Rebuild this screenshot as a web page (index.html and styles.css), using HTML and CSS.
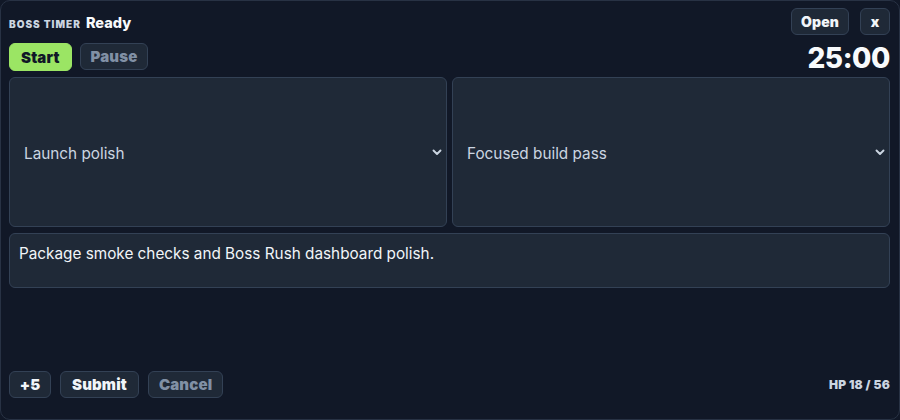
FILE: index.html
```html
<!DOCTYPE html>
<html lang="en">
<head>
    <meta charset="UTF-8">
    <meta name="viewport" content="width=device-width, initial-scale=1.0">
    <title>Boss Timer</title>
    <link rel="stylesheet" href="styles.css">
</head>
<body>
    <div class="widget">
        <!-- Title row -->
        <div class="top-row">
            <div class="title">
                <span class="brand">Boss Timer</span>
                <span class="status">Ready</span>
            </div>
            <div class="window-actions">
                <button class="btn">Open</button>
                <button class="btn btn-close">x</button>
            </div>
        </div>

        <!-- Controls + clock -->
        <div class="control-row">
            <div class="button-group">
                <button class="btn btn-start">Start</button>
                <button class="btn btn-muted">Pause</button>
            </div>
            <div class="clock">25:00</div>
        </div>

        <div class="select-grid">
            <select class="field">
                <option>Launch polish</option>
            </select>
            <select class="field">
                <option>Focused build pass</option>
            </select>
        </div>

        <textarea class="field notes">Package smoke checks and Boss Rush dashboard polish.</textarea>

        <div class="footer">
            <div class="button-group">
                <button class="btn btn-small">+5</button>
                <button class="btn btn-wide">Submit</button>
                <button class="btn btn-muted">Cancel</button>
            </div>
            <div class="hp">HP 18 / 56</div>
        </div>
    </div>
</body>
</html>
```

FILE: styles.css
```css
* {
    box-sizing: border-box;
}
html, body {
    margin: 0;
    background-color: #111827;
}
body {
    font-family: Inter, "Noto Sans", sans-serif;
    color: #f8fafc;
}
.widget {
    height: 420px;
    display: flex;
    flex-direction: column;
    border: 1px solid #283244;
    border-radius: 10px;
    padding: 7px 9px 21px 8px;
    background-color: #111827;
}
.top-row {
    display: flex;
    justify-content: space-between;
    align-items: center;
    height: 27px;
}
.title {
    display: flex;
    align-items: baseline;
    gap: 5px;
    margin-top: 2px;
}
.brand {
    font-size: 10px;
    font-weight: 900;
    text-transform: uppercase;
    letter-spacing: 0.1em;
    color: #cbd5e1;
}
.status {
    font-size: 14.5px;
    font-weight: 800;
    color: #f8fafc;
}
.window-actions {
    display: flex;
    gap: 11px;
}
.btn {
    font-family: inherit;
    height: 27px;
    padding: 0 10px;
    font-size: 15px;
    font-weight: 900;
    letter-spacing: 0.01em;
    color: #f1f5f9;
    background-color: #1f2937;
    border: 1px solid #334155;
    border-radius: 6px;
    cursor: pointer;
}
.window-actions .btn {
    font-size: 14px;
    padding: 0 9px;
}
.btn-close {
    width: 30px;
    padding: 0;
}
.btn-small {
    width: 42px;
    padding: 0;
}
.btn-wide {
    padding: 0 11px;
}
.btn-start {
    height: 28px;
    background-color: #9be564;
    border-color: #9be564;
    color: #111827;
    padding: 0 11px;
}
.btn-muted {
    color: #8190a5;
}
.control-row {
    display: flex;
    justify-content: space-between;
    align-items: center;
    margin-top: 8px;
    height: 28px;
}
.button-group {
    display: flex;
    gap: 8px;
}
.clock {
    font-size: 28px;
    font-weight: 800;
    line-height: 1;
    letter-spacing: -0.015em;
    margin-top: 2px;
}
.select-grid {
    display: grid;
    grid-template-columns: 1fr 1fr;
    gap: 5px;
    margin-top: 6px;
}
.field {
    font-family: inherit;
    font-size: 15.3px;
    background-color: #1f2937;
    border: 1px solid #334155;
    border-radius: 6px;
}
select.field {
    appearance: none;
    -webkit-appearance: none;
    height: 150px;
    padding: 2px 24px 0 14px;
    color: #cbd5e1;
    background-image: url("data:image/svg+xml,%3Csvg xmlns='http://www.w3.org/2000/svg' width='10' height='7' viewBox='0 0 10 7'%3E%3Cpath d='M1.5 1.5 5 5l3.5-3.5' fill='none' stroke='%23cbd5e1' stroke-width='1.9' stroke-linecap='round' stroke-linejoin='round'/%3E%3C/svg%3E");
    background-repeat: no-repeat;
    background-position: right 4px center;
}
.notes {
    display: block;
    width: 100%;
    height: 55px;
    margin-top: 6px;
    padding: 10px 9px;
    color: #f1f5f9;
    resize: none;
    line-height: 1.25;
}
.footer {
    margin-top: auto;
    display: flex;
    justify-content: space-between;
    align-items: center;
}
.footer .button-group {
    gap: 9px;
}
.hp {
    font-size: 12px;
    font-weight: 900;
    letter-spacing: 0.02em;
    color: #cbd5e1;
}
```
